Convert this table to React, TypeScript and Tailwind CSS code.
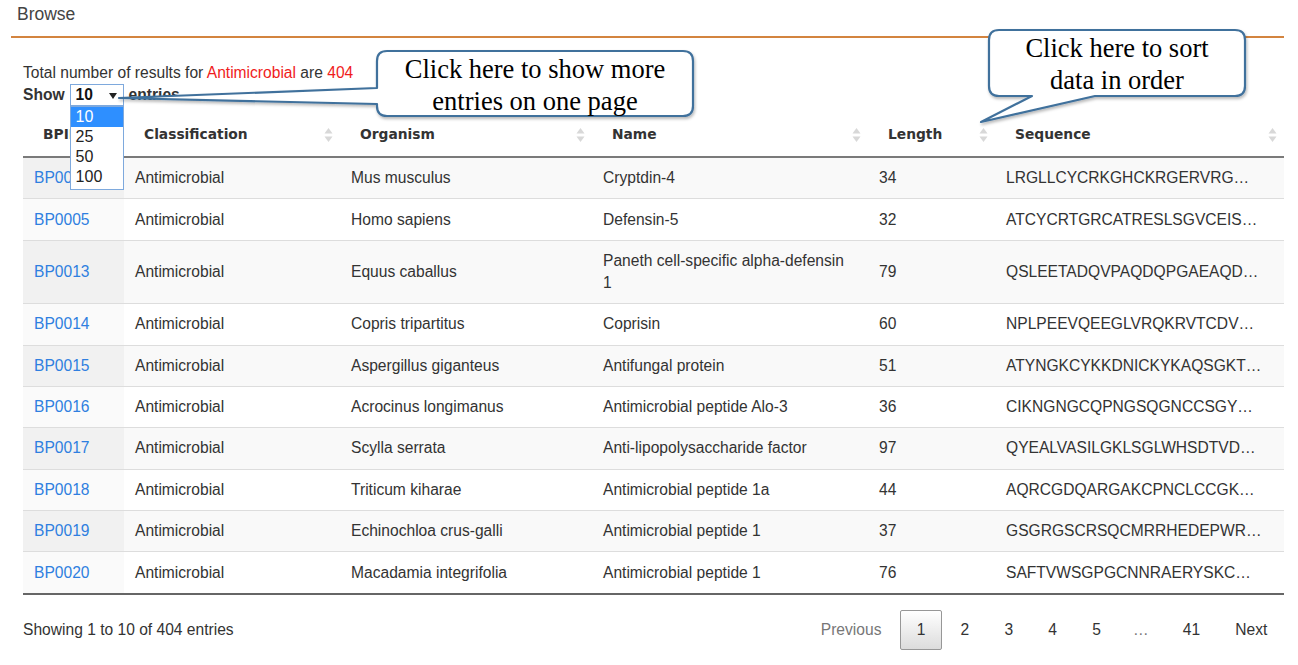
import React from "react";

type Row = {
  id: string;
  cls: string;
  org: string;
  name: string;
  len: string;
  seq: string;
};

const rows: Row[] = [
  { id: "BP0004", cls: "Antimicrobial", org: "Mus musculus", name: "Cryptdin-4", len: "34", seq: "LRGLLCYCRKGHCKRGERVRG…" },
  { id: "BP0005", cls: "Antimicrobial", org: "Homo sapiens", name: "Defensin-5", len: "32", seq: "ATCYCRTGRCATRESLSGVCEIS…" },
  { id: "BP0013", cls: "Antimicrobial", org: "Equus caballus", name: "Paneth cell-specific alpha-defensin 1", len: "79", seq: "QSLEETADQVPAQDQPGAEAQD…" },
  { id: "BP0014", cls: "Antimicrobial", org: "Copris tripartitus", name: "Coprisin", len: "60", seq: "NPLPEEVQEEGLVRQKRVTCDV…" },
  { id: "BP0015", cls: "Antimicrobial", org: "Aspergillus giganteus", name: "Antifungal protein", len: "51", seq: "ATYNGKCYKKDNICKYKAQSGKT…" },
  { id: "BP0016", cls: "Antimicrobial", org: "Acrocinus longimanus", name: "Antimicrobial peptide Alo-3", len: "36", seq: "CIKNGNGCQPNGSQGNCCSGY…" },
  { id: "BP0017", cls: "Antimicrobial", org: "Scylla serrata", name: "Anti-lipopolysaccharide factor", len: "97", seq: "QYEALVASILGKLSGLWHSDTVD…" },
  { id: "BP0018", cls: "Antimicrobial", org: "Triticum kiharae", name: "Antimicrobial peptide 1a", len: "44", seq: "AQRCGDQARGAKCPNCLCCGK…" },
  { id: "BP0019", cls: "Antimicrobial", org: "Echinochloa crus-galli", name: "Antimicrobial peptide 1", len: "37", seq: "GSGRGSCRSQCMRRHEDEPWR…" },
  { id: "BP0020", cls: "Antimicrobial", org: "Macadamia integrifolia", name: "Antimicrobial peptide 1", len: "76", seq: "SAFTVWSGPGCNNRAERYSKC…" },
];

const headers = ["BPID", "Classification", "Organism", "Name", "Length", "Sequence"];

// little up/down arrows in the header cells
const SortIcon = () => (
  <svg width="9" height="15" viewBox="0 0 9 15" className="absolute right-[7px] top-1/2 -translate-y-1/2">
    <path d="M4.5 0.5 L8.5 6 H0.5 Z" fill="#d8d8d8" />
    <path d="M4.5 14.5 L8.5 9 H0.5 Z" fill="#d8d8d8" />
  </svg>
);

const Callouts = () => (
  <>
    <svg
      width="1298"
      height="665"
      viewBox="0 0 1298 665"
      className="absolute left-0 top-0 pointer-events-none"
    >
      <defs>
        <filter id="shadow" x="-10%" y="-20%" width="120%" height="150%">
          <feDropShadow dx="1" dy="2" stdDeviation="1.4" floodColor="#000" floodOpacity="0.28" />
        </filter>
      </defs>
      <path
        d="M387 51 H683 Q693 51 693 61 V106 Q693 116 683 116 H387 Q377 116 377 106 V104 L119 98 L377 88 V61 Q377 51 387 51 Z"
        fill="#fff"
        stroke="#41719c"
        strokeWidth="2.2"
        strokeLinejoin="round"
        filter="url(#shadow)"
      />
      <path
        d="M999 30 H1235 Q1245 30 1245 40 V86 Q1245 96 1235 96 H1095 L981 122 L1032 96 H999 Q989 96 989 86 V40 Q989 30 999 30 Z"
        fill="#fff"
        stroke="#41719c"
        strokeWidth="2.2"
        strokeLinejoin="round"
        filter="url(#shadow)"
      />
    </svg>
    <div className="absolute left-[377px] top-[53px] w-[316px] text-center font-['Liberation_Serif',serif] text-[26.5px] leading-[32px] text-black">
      Click here to show more
      <br />
      entries on one page
    </div>
    <div className="absolute left-[989px] top-[32px] w-[256px] text-center font-['Liberation_Serif',serif] text-[26.5px] leading-[32px] text-black">
      Click here to sort
      <br />
      data in order
    </div>
  </>
);

export default function App() {
  return (
    <div className="relative w-[1298px] h-[665px] overflow-hidden bg-white font-['Liberation_Sans',Arial,sans-serif] text-[#333]">
      <div className="pl-[17px] pt-[4px] text-[17.5px] leading-[20px] text-[#444]">Browse</div>
      <div className="ml-[11px] mr-[14px] mt-[12px] h-[2px] bg-[#d3843f]" />

      <div className="pl-[23px] pr-[14px]">
        <div className="mt-[24px] text-[15.6px] leading-[22px]">
          Total number of results for <span className="text-[#f01c1c]">Antimicrobial</span> are{" "}
          <span className="text-[#f01c1c]">404</span>
        </div>

        <div className="relative flex items-center h-[22px] text-[15.6px] font-bold">
          <span>Show</span>
          <div className="relative ml-[5px] w-[54px] h-[22px] border border-[#7ea9dd] bg-white flex items-center pl-[5px]">
            <span className="text-[#111]">10</span>
            <svg width="8" height="6" viewBox="0 0 8 6" className="absolute left-[38px] top-[8px]">
              <path d="M0 0 H8 L4 6 Z" fill="#222" />
            </svg>
            <div className="absolute left-[-1px] top-[21px] w-[54px] border border-[#7ea9dd] bg-white z-10 font-normal text-[16px] leading-[20px] pb-[2px]">
              <div className="bg-[#2e8fff] text-white pl-[5px]">10</div>
              <div className="pl-[5px] text-[#222]">25</div>
              <div className="pl-[5px] text-[#222]">50</div>
              <div className="pl-[5px] text-[#222]">100</div>
            </div>
          </div>
          <span className="ml-[5px]">entries</span>
        </div>

        <table className="mt-[8px] w-[1261px] table-fixed border-collapse">
          <colgroup>
            <col className="w-[101px]" />
            <col className="w-[216px]" />
            <col className="w-[252px]" />
            <col className="w-[276px]" />
            <col className="w-[127px]" />
            <col className="w-[289px]" />
          </colgroup>
          <thead>
            <tr className="border-b-2 border-[#7a7a7a]">
              {headers.map((h) => (
                <th
                  key={h}
                  className="relative text-left pl-[20px] pt-[9px] pb-[11px] leading-[22px] font-['DejaVu_Sans',Verdana,sans-serif] font-bold text-[13.8px] text-[#333]"
                >
                  {h}
                  <SortIcon />
                </th>
              ))}
            </tr>
          </thead>
          <tbody className="text-[15.6px] leading-[22px]">
            {rows.map((r, i) => {
              const odd = i % 2 === 0;
              const cell = "pl-[11px] pr-[11px] py-[9.2px] align-middle";
              return (
                <tr
                  key={r.id}
                  className={`${odd ? "bg-[#f9f9f9]" : "bg-white"} ${i > 0 ? "border-t border-[#dddddd]" : ""} ${i === rows.length - 1 ? "border-b-2 border-b-[#666]" : ""}`}
                >
                  <td className={`${cell} pl-[10px] ${odd ? "bg-[#f1f1f1]" : "bg-[#fafafa]"}`}>
                    <span className="text-[#2f7fe0]">{r.id}</span>
                  </td>
                  <td className={cell}>{r.cls}</td>
                  <td className={cell}>{r.org}</td>
                  <td className={cell}>
                    <div className="max-w-[248px]">{r.name}</div>
                  </td>
                  <td className={cell}>{r.len}</td>
                  <td className={`${cell} whitespace-nowrap`}>{r.seq}</td>
                </tr>
              );
            })}
          </tbody>
        </table>

        <div className="mt-[15px] flex items-center justify-between text-[15.6px] leading-[22px]">
          <div>Showing 1 to 10 of 404 entries</div>
          <div className="flex items-center">
            <span className="px-[15.6px] py-[8px] border border-transparent text-[#777]">Previous</span>
            <span className="ml-[2px] px-[15.6px] py-[8px] border border-[#979797] rounded-[2px] bg-gradient-to-b from-white to-[#dcdcdc] text-[#333]">
              1
            </span>
            {["2", "3", "4", "5"].map((n) => (
              <span key={n} className="ml-[2px] px-[15.6px] py-[8px] border border-transparent text-[#333]">
                {n}
              </span>
            ))}
            <span className="px-[15.6px] text-[#777]">…</span>
            <span className="ml-[2px] px-[15.6px] py-[8px] border border-transparent text-[#333]">41</span>
            <span className="ml-[2px] px-[15.6px] py-[8px] border border-transparent text-[#333]">Next</span>
          </div>
        </div>
      </div>

      <Callouts />
    </div>
  );
}
